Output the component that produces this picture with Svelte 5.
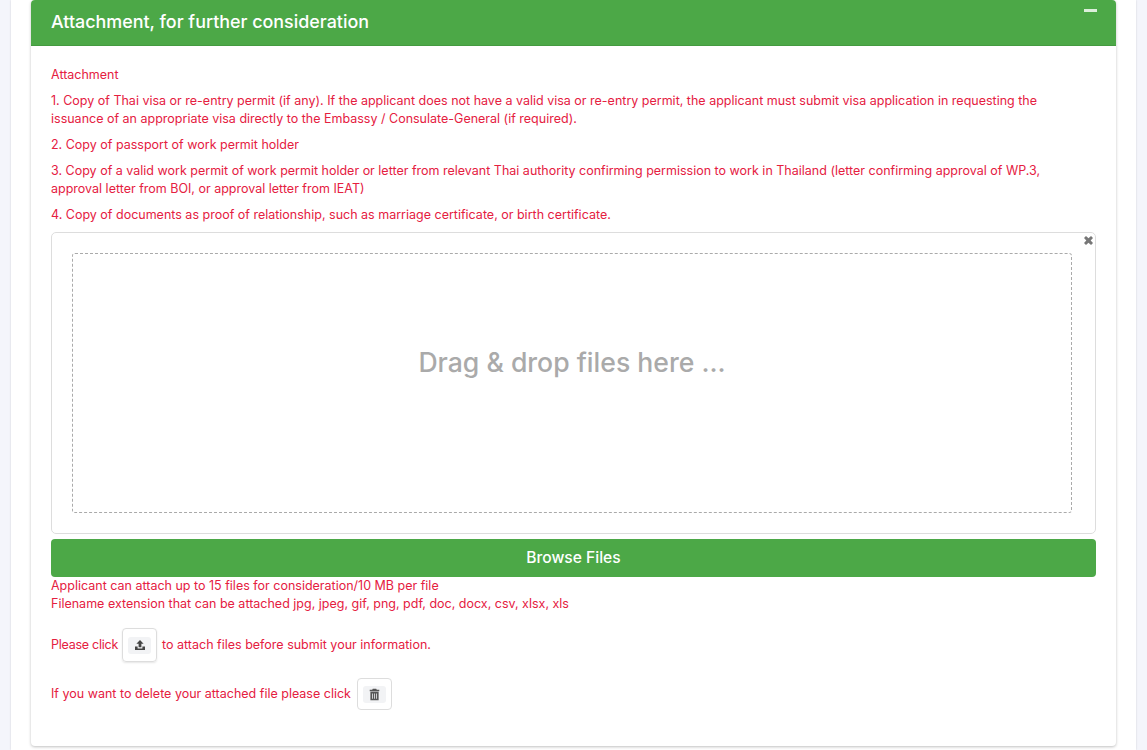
<script lang="ts">
	const notes = [
		'Attachment',
		'1. Copy of Thai visa or re-entry permit (if any). If the applicant does not have a valid visa or re-entry permit, the applicant must submit visa application in requesting the issuance of an appropriate visa directly to the Embassy / Consulate-General (if required).',
		'2. Copy of passport of work permit holder',
		'3. Copy of a valid work permit of work permit holder or letter from relevant Thai authority confirming permission to work in Thailand (letter confirming approval of WP.3, approval letter from BOI, or approval letter from IEAT)',
		'4. Copy of documents as proof of relationship, such as marriage certificate, or birth certificate.'
	];
</script>

<div class="page">
	<div class="wrapper">
		<section class="card">
			<header class="card-header">
				<h2>Attachment, for further consideration</h2>
				<span class="collapse"></span>
			</header>
			<div class="card-body">
				{#each notes as note}
					<p>{note}</p>
				{/each}

				<div class="file-drop">
					<span class="close">
						<svg viewBox="0 0 10 10" width="9" height="9"><path d="M2.2 0 5 2.6 7.8 0 10 2.2 7.4 5 10 7.8 7.8 10 5 7.4 2.2 10 0 7.8 2.6 5 0 2.2Z" fill="#777" /></svg>
					</span>
					<div class="drop-zone">Drag &amp; drop files here ...</div>
				</div>

				<button class="browse">Browse Files</button>

				<div class="limits">
					Applicant can attach up to 15 files for consideration/10 MB per file<br />
					Filename extension that can be attached jpg, jpeg, gif, png, pdf, doc, docx, csv, xlsx, xls
				</div>

				<div class="hint first">
					<span class="please">Please click</span>
					<span class="icon-box tall">
						<span class="icon-inner">
							<svg viewBox="0 0 12 12" width="12" height="12"><path d="M6 1 9.6 4.8H7.4V8.2H4.6V4.8H2.4ZM1 7.6H3.6V9.4H8.4V7.6H11V11H1Z" fill="#444" /></svg>
						</span>
					</span>
					<span>to attach files before submit your information.</span>
				</div>

				<div class="hint second">
					<span>If you want to delete your attached file please click</span>
					<span class="icon-box">
						<span class="icon-inner">
							<svg viewBox="0 0 12 12" width="13" height="13"><path d="M4.4 0.8H7.6L8.1 1.7H10.4V3H1.6V1.7H3.9ZM2.2 3.5H9.8V11.4H2.2ZM3.9 5V10H4.6V5ZM5.65 5V10H6.35V5ZM7.4 5V10H8.1V5Z" fill="#555" fill-rule="evenodd" /></svg>
						</span>
					</span>
				</div>
			</div>
		</section>
	</div>
</div>

<style>
	:global(body) {
		background: #f4f5fb;
		font-family: 'Inter', 'Noto Sans', sans-serif;
	}

	.page {
		height: 750px;
		overflow: hidden;
		padding: 0 11px;
		box-sizing: border-box;
	}

	.wrapper {
		background: #fff;
		height: 100%;
		padding: 0 20px;
		box-shadow: 0 0 2px rgba(0, 0, 0, 0.15);
	}

	.card {
		height: 746px;
		background: #fff;
		border-radius: 4px;
		box-shadow: 0 1px 3px rgba(0, 0, 0, 0.25);
		overflow: hidden;
	}

	.card-header {
		height: 46px;
		background: #4ca847;
		border-bottom: 1px solid #449a40;
		box-sizing: border-box;
		padding: 0 19px 2px 20px;
		display: flex;
		align-items: center;
		justify-content: space-between;
	}

	h2 {
		margin: 0;
		font-size: 17.9px;
		font-weight: 500;
		color: #fff;
	}

	.collapse {
		width: 13px;
		height: 3px;
		background: #dcefdb;
		margin-bottom: 22px;
	}

	.card-body {
		padding: 20px;
		color: #e5203f;
		font-size: 12.5px;
		line-height: 18px;
	}

	p {
		margin: 0 0 8px;
		max-width: 1010px;
	}

	.file-drop {
		position: relative;
		height: 302px;
		box-sizing: border-box;
		border: 1px solid #ddd;
		border-radius: 5px;
		padding: 20px 23px 20px 20px;
	}

	.close {
		position: absolute;
		top: 3px;
		right: 2px;
		line-height: 0;
	}

	.drop-zone {
		height: 100%;
		box-sizing: border-box;
		border: 1px dashed #aaa;
		border-radius: 3px;
		display: flex;
		align-items: center;
		justify-content: center;
		color: #aaa;
		font-size: 26.6px;
		font-weight: 500;
		line-height: 1;
		padding-bottom: 42px;
	}

	.browse {
		display: block;
		width: 100%;
		height: 38px;
		margin-top: 5px;
		padding: 0 0 2px;
		border: 0;
		border-radius: 4px;
		background: #4ca847;
		color: #fff;
		font: 500 15.6px 'Inter', 'Noto Sans', sans-serif;
	}

	.hint {
		display: flex;
		align-items: center;
		gap: 4px;
	}

	.hint.first {
		margin-top: 15px;
		gap: 4px 5px;
	}

	.hint.second {
		margin-top: 16px;
		gap: 6px;
	}

	.please {
		letter-spacing: -0.25px;
		margin-right: -1px;
	}

	.icon-box {
		width: 35px;
		height: 32px;
		box-sizing: border-box;
		border: 1px solid #ddd;
		border-radius: 4px;
		display: flex;
		align-items: center;
		justify-content: center;
	}

	.icon-box.tall {
		height: 34px;
		box-shadow: 0 1px 2px rgba(0, 0, 0, 0.1);
	}

	.icon-inner {
		width: 23px;
		height: 17px;
		background: #f2f3f5;
		border-radius: 3px;
		display: flex;
		align-items: center;
		justify-content: center;
	}
</style>
